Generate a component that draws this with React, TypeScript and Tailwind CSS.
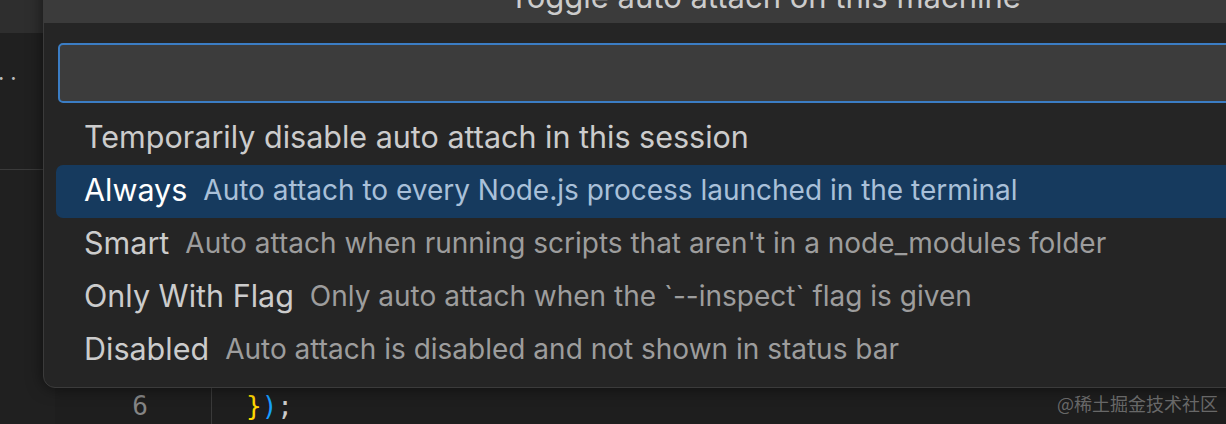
const items = [
  { label: "Temporarily disable auto attach in this session", desc: "" },
  { label: "Always", desc: "Auto attach to every Node.js process launched in the terminal", active: true },
  { label: "Smart", desc: "Auto attach when running scripts that aren't in a node_modules folder" },
  { label: "Only With Flag", desc: "Only auto attach when the `--inspect` flag is given" },
  { label: "Disabled", desc: "Auto attach is disabled and not shown in status bar" },
];

export default function App() {
  return (
    <div className="relative h-[424px] w-[1226px] overflow-hidden bg-[#1f1f1f] font-['Inter',sans-serif]">
      {/* background: sidebar strip + editor */}
      <div className="flex h-full">
        <div className="flex w-[55px] flex-col bg-[#202020]">
          <div className="h-[33px] bg-[#2e2e2e]" />
          <div className="flex h-[137px] items-center border-b border-[#3a3a3a] pb-[58px] text-[#bbbbbb]">
            <span className="-ml-[2px] text-[22px] leading-none tracking-[6px]">..</span>
          </div>
        </div>
        <div className="flex flex-1 flex-col justify-end bg-[#1e1e1e]">
          <div className="flex h-[36px] items-center font-['DejaVu_Sans_Mono',monospace] text-[26px]">
            <div className="flex h-full w-[157px] items-center justify-end border-r border-[#3a3a3a] pr-[63px] text-[#858585]">
              6
            </div>
            <div className="pl-[34px]">
              <span className="text-[#ffd700]">{"}"}</span>
              <span className="text-[#179fff]">)</span>
              <span className="text-[#cccccc]">;</span>
            </div>
          </div>
        </div>
      </div>

      {/* quick pick overlay */}
      <div className="absolute left-[43px] top-[-30px] flex h-[418px] w-[1444px] flex-col overflow-hidden rounded-[12px] border border-[#3b3b3b] bg-[#252525] shadow-[0_0_16px_rgba(0,0,0,0.55)]">
        <div className="flex h-[52px] items-center justify-center bg-[#3b3b3b] text-[31px] text-[#cccccc]">
          Toggle auto attach on this machine
        </div>
        <div className="px-[14px] pt-[20px]">
          <div className="h-[60px] rounded-[5px] border-2 border-[#3b7dc4] bg-[#3c3c3c]" />
        </div>
        <div className="flex flex-col px-[12px] pt-[9px]">
          {items.map((it) => (
            <div
              key={it.label}
              className={`flex h-[53px] items-center gap-[16px] rounded-[7px] pb-[3px] pl-[28px] ${it.active ? "bg-[#163a5e]" : ""}`}
            >
              <span className={`text-[30.5px] ${it.active ? "text-white" : "text-[#cccccc]"}`}>{it.label}</span>
              {it.desc && (
                <span className={`text-[28px] ${it.active ? "text-[#a9c0d9]" : "text-[#9d9d9d]"}`}>{it.desc}</span>
              )}
            </div>
          ))}
        </div>
      </div>

      <div className="absolute bottom-[7px] right-[8px] font-['Noto_Sans_CJK_SC',sans-serif] text-[18px] text-[#8a8a8a]/70">
        @稀土掘金技术社区
      </div>
    </div>
  );
}
